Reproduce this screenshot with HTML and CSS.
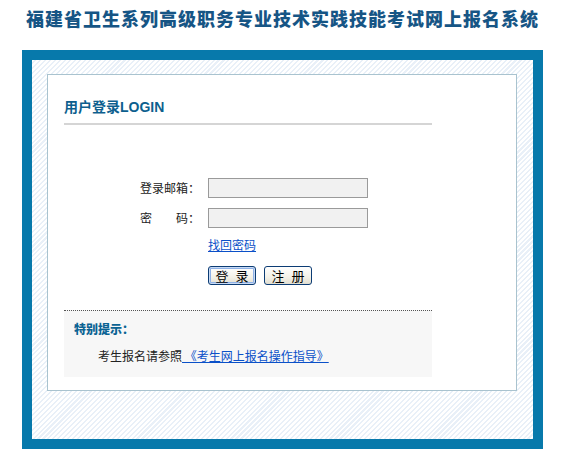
FILE: index.html
```html
<!DOCTYPE html>
<html lang="zh-CN">
<head>
<meta charset="utf-8">
<title>福建省卫生系列高级职务专业技术实践技能考试网上报名系统</title>
<link rel="stylesheet" href="styles.css">
</head>
<body>
<div class="page">
  <h1 class="title">福建省卫生系列高级职务专业技术实践技能考试网上报名系统</h1>
  <div class="frame">
    <div class="hatch">
      <div class="panel">
        <div class="content">
          <h2 class="panel-head">用户登录<span class="latin">LOGIN</span></h2>
          <form class="login" onsubmit="return false">
            <label class="lbl" for="email">登录邮箱：</label>
            <input class="field" id="email" type="text">
            <label class="lbl" for="pwd">密　　码：</label>
            <input class="field" id="pwd" type="password">
            <div class="span-cell"><a class="link" href="#">找回密码</a></div>
            <div class="span-cell btns">
              <button class="btn btn-default" type="button">登 录</button>
              <button class="btn" type="button">注 册</button>
            </div>
          </form>
          <div class="notice">
            <h3 class="notice-head">特别提示：</h3>
            <p class="notice-text">考生报名请参照<a class="link" href="#">&nbsp;《考生网上报名操作指导》 </a></p>
          </div>
        </div>
      </div>
    </div>
  </div>
</div>
</body>
</html>
```

FILE: styles.css
```css
* { box-sizing: border-box; }

body {
  margin: 0;
  background: #ffffff;
  font-family: "Noto Sans CJK SC", "Liberation Sans", sans-serif;
  font-size: 12px;
  color: #222;
}

.page {
  width: 521px;
  margin-left: 22px;
}

.title {
  margin: 0;
  height: 36px;
  line-height: 36px;
  text-align: center;
  font-size: 18px;
  font-weight: 900;
  letter-spacing: 1px;
  color: #165585;
  white-space: nowrap;
}

.frame {
  margin-top: 14px;
  width: 521px;
  border: 10px solid #0779ab;
}

.hatch {
  padding: 14px 16px 48px 15px;
  background: repeating-linear-gradient(135deg, #ffffff 0, #ffffff 2px, #e9f0f8 2px, #e9f0f8 3.5px);
}

.panel {
  width: 470px;
  height: 317px;
  border: 1px solid #a9c3cf;
  background: #ffffff;
  padding: 0 16px;
}

.content {
  width: 368px;
}

.panel-head {
  margin: 0;
  padding: 22px 0 7px;
  line-height: 18px;
  font-size: 14px;
  font-weight: bold;
  color: #0d5f8e;
  border-bottom: 2px solid #d5d5d5;
}

.latin {
  font-family: "Liberation Sans", Arial, sans-serif;
}

.login {
  margin: 53px 0 0 76px;
  display: grid;
  grid-template-columns: 60px 160px;
  column-gap: 8px;
  row-gap: 10px;
  align-items: center;
}

.lbl {
  line-height: 20px;
  color: #222;
  white-space: nowrap;
}

.field {
  width: 160px;
  height: 20px;
  margin: 0;
  padding: 0 3px;
  border: 1px solid #9a9a9a;
  background: #f1f1f1;
  font: inherit;
}

.span-cell {
  grid-column: 2;
  line-height: 14px;
}

.link {
  color: #0a50c8;
  text-decoration: underline;
}

.btns {
  margin-top: 4px;
  display: flex;
  gap: 8px;
}

.btn {
  width: 48px;
  height: 19px;
  margin: 0;
  padding: 0;
  border: 1px solid #0c3c74;
  border-radius: 3px;
  background: linear-gradient(#ffffff, #f3f1e8 60%, #e2ded0);
  font-family: "Noto Sans CJK SC", sans-serif;
  font-size: 13px;
  line-height: 17px;
  word-spacing: 4px;
  color: #000;
}

.btn-default {
  box-shadow: inset 0 0 0 1px #c8daf4, inset 0 0 0 2px #8fb1e6;
}

.notice {
  margin-top: 25px;
  border-top: 1px dotted #555;
  background: #f7f7f7;
  padding: 9px 10px 12px;
}

.notice-head {
  margin: 0;
  font-size: 12px;
  line-height: 18px;
  font-weight: 900;
  color: #0b6393;
}

.notice-text {
  margin: 9px 0 0;
  padding-left: 24px;
  line-height: 18px;
  color: #222;
}
```
